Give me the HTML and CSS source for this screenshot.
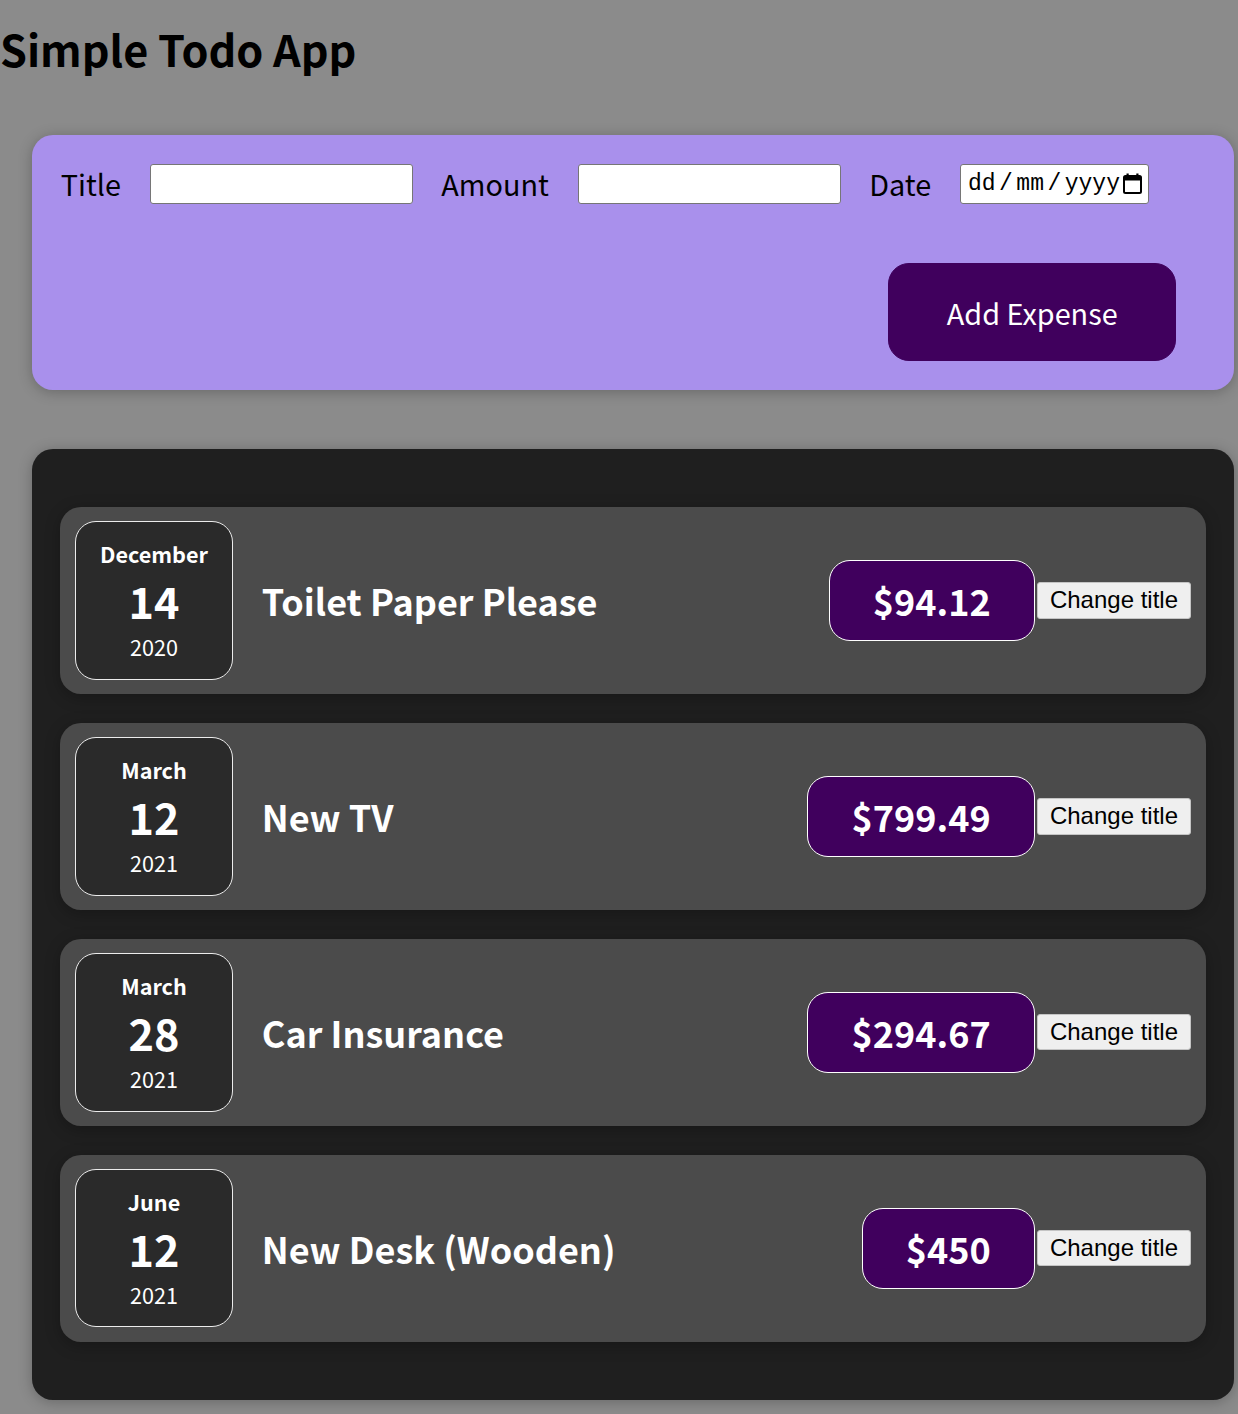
FILE: index.html
```html
<!DOCTYPE html>
<html lang="en">
<head>
<meta charset="utf-8">
<title>Simple Todo App</title>
<link rel="stylesheet" href="styles.css">
</head>
<body>
<h1 class="app-title">Simple Todo App</h1>
<div class="new-expense">
  <form class="expense-form">
    <div class="controls">
      <label class="ctl-label">Title</label>
      <input class="ctl-input" type="text">
      <label class="ctl-label">Amount</label>
      <input class="ctl-input" type="text">
      <label class="ctl-label">Date</label>
      <div class="date-input">
        <span>dd</span><span class="sep">/</span><span>mm</span><span class="sep">/</span><span>yyyy</span>
        <svg class="cal-icon" width="19" height="21" viewBox="0 0 19 21" aria-hidden="true">
          <rect x="1" y="3" width="17" height="17" rx="1.5" fill="none" stroke="#000" stroke-width="2"/>
          <rect x="1" y="3" width="17" height="4.5" fill="#000"/>
          <rect x="3.5" y="0.5" width="2.2" height="4" fill="#000"/>
          <rect x="13.3" y="0.5" width="2.2" height="4" fill="#000"/>
        </svg>
      </div>
    </div>
    <div class="actions">
      <button class="add-btn" type="button">Add Expense</button>
    </div>
  </form>
</div>

<div class="expenses">
  <div class="expense-item">
    <div class="expense-date"><div class="month">December</div><div class="day">14</div><div class="year">2020</div></div>
    <div class="desc"><h2 class="item-title">Toilet Paper Please</h2><div class="price">$94.12</div></div>
    <button class="change-btn" type="button">Change title</button>
  </div>
  <div class="expense-item">
    <div class="expense-date"><div class="month">March</div><div class="day">12</div><div class="year">2021</div></div>
    <div class="desc"><h2 class="item-title">New TV</h2><div class="price">$799.49</div></div>
    <button class="change-btn" type="button">Change title</button>
  </div>
  <div class="expense-item">
    <div class="expense-date"><div class="month">March</div><div class="day">28</div><div class="year">2021</div></div>
    <div class="desc"><h2 class="item-title">Car Insurance</h2><div class="price">$294.67</div></div>
    <button class="change-btn" type="button">Change title</button>
  </div>
  <div class="expense-item">
    <div class="expense-date"><div class="month">June</div><div class="day">12</div><div class="year">2021</div></div>
    <div class="desc"><h2 class="item-title">New Desk (Wooden)</h2><div class="price">$450</div></div>
    <button class="change-btn" type="button">Change title</button>
  </div>
</div>
</body>
</html>
```

FILE: styles.css
```css
html, body {
  margin: 0;
  padding: 0;
}

body {
  background-color: #8b8b8b;
  font-family: "Noto Sans CJK JP", "Noto Sans", sans-serif;
  color: #000;
}

.app-title {
  margin: 17px 0 0 0;
  font-size: 43.2px;
  font-weight: 700;
  line-height: normal;
}

.new-expense {
  margin: 56px 4px 0 32px;
  padding: 28.8px;
  background-color: #a990ec;
  border-radius: 21px;
  box-shadow: 0 2px 14px rgba(0, 0, 0, 0.25);
}

.expense-form {
  margin: 0;
}

.controls {
  display: flex;
  align-items: center;
  gap: 28.7px;
  height: 40px;
}

.ctl-label {
  font-size: 28.8px;
  line-height: 40px;
  font-weight: 400;
}

.ctl-input {
  box-sizing: border-box;
  width: 263px;
  height: 40px;
  margin: 0;
  padding: 2px 8px;
  border: 1px solid #767676;
  border-radius: 3px;
  background: #fff;
  font-size: 21.6px;
}

.date-input {
  box-sizing: border-box;
  width: 189px;
  height: 40px;
  display: flex;
  align-items: center;
  padding: 0 6px 0 7px;
  border: 1px solid #767676;
  border-radius: 3px;
  background: #fff;
  font-family: "Liberation Mono", "Courier New", monospace;
  font-size: 23px;
  color: #000;
}

.date-input .sep {
  margin: 0 3.5px;
}

.cal-icon {
  margin-left: 3px;
  flex: none;
}

.actions {
  display: flex;
  justify-content: flex-end;
  margin-top: 59px;
}

.add-btn {
  font-family: inherit;
  font-size: 28.8px;
  line-height: 39px;
  padding: 28.8px 57.6px;
  margin-right: 29px;
  border: 1px solid #40005d;
  border-radius: 21px;
  background-color: #40005d;
  color: #fff;
  cursor: pointer;
}

.expenses {
  margin: 59px 4px 15px 32px;
  padding: 28.8px 28px 29.5px;
  background-color: #1f1f1f;
  border-radius: 21px;
  box-shadow: 0 2px 14px rgba(0, 0, 0, 0.25);
}

.expense-item {
  display: flex;
  align-items: center;
  margin: 28.8px 0;
  padding: 14.4px 15px;
  background-color: #4b4b4b;
  border-radius: 21px;
  box-shadow: 0 3.6px 14.4px rgba(0, 0, 0, 0.25);
}

.expense-date {
  box-sizing: border-box;
  width: 158px;
  height: 158.4px;
  flex: none;
  display: flex;
  flex-direction: column;
  align-items: center;
  justify-content: center;
  border: 1px solid #ececec;
  border-radius: 21px;
  background-color: #2a2a2a;
  color: #fff;
}

.month {
  font-size: 21.6px;
  font-weight: 700;
  line-height: 31px;
}

.day {
  font-size: 43.2px;
  font-weight: 700;
  line-height: 62px;
}

.year {
  font-size: 21.6px;
  line-height: 31px;
}

.desc {
  flex: 1;
  display: flex;
  align-items: center;
}

.item-title {
  flex: 1;
  margin: 0 28.8px;
  font-size: 36px;
  font-weight: 700;
  color: #fff;
}

.price {
  padding: 14.4px 43.2px;
  font-size: 36px;
  font-weight: 700;
  line-height: 50px;
  color: #fff;
  background-color: #40005d;
  border: 1px solid #fff;
  border-radius: 21px;
}

.change-btn {
  margin-left: 2px;
  padding: 3.2px 12px;
  font-family: "Liberation Sans", Arial, sans-serif;
  font-size: 24px;
  line-height: normal;
  color: #000;
  background-color: #efefef;
  border: 1px solid #c4c4c4;
  border-radius: 3px;
}
```
